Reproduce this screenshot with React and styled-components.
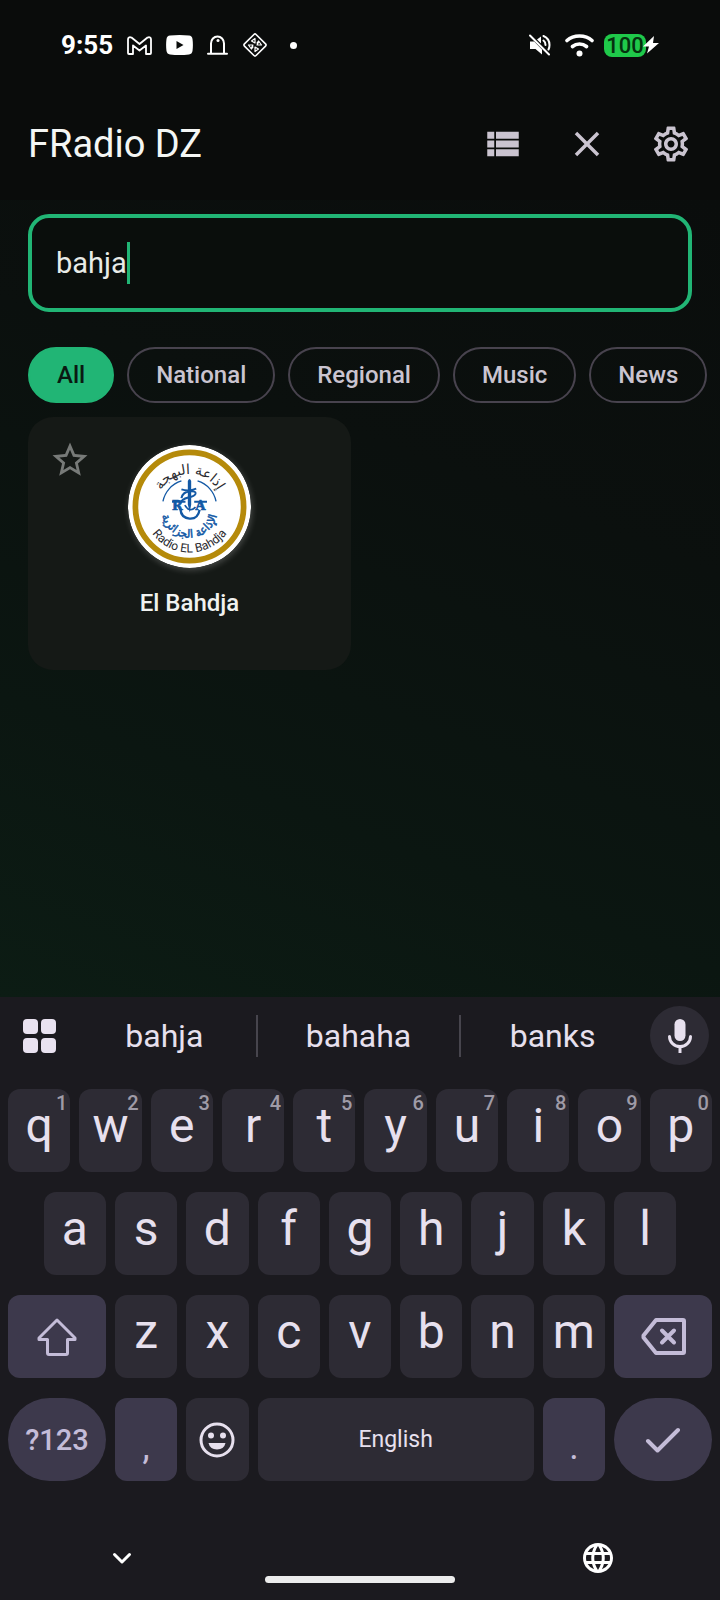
import React, { useState } from 'react'
import styled, { createGlobalStyle } from 'styled-components'
import { MdViewList, MdClose, MdOutlineSettings, MdStarOutline, MdLanguage } from 'react-icons/md'

const GlobalStyle = createGlobalStyle`
  * {
    box-sizing: border-box;
  }

  body {
    margin: 0;
    background: #0a0d0c;
    font-family: Roboto, "Liberation Sans", sans-serif;
  }

  button, input {
    margin: 0;
    padding: 0;
    border: 0;
    background: none;
    color: inherit;
    font: inherit;
    outline: none;
  }

  svg {
    display: block;
  }
`

const Screen = styled.div`
  min-height: 100vh;
  display: flex;
  flex-direction: column;
  overflow: hidden;
  background: #0a0c0b;
`

const StatusBar = styled.div`
  height: 88px;
  padding: 2px 60px 0 61px;
  display: flex;
  align-items: center;
  justify-content: space-between;
  color: #ffffff;
`

const StatusGroup = styled.div`
  display: flex;
  align-items: center;
  gap: 14px;
`

const Clock = styled.time`
  font-size: 26px;
  font-weight: 700;
  line-height: 28px;
`

const Dot = styled.i`
  width: 7px;
  height: 7px;
  margin-left: 8px;
  border-radius: 50%;
  background: #ffffff;
`

const Battery = styled.div`
  margin-left: -4px;
  display: flex;
  align-items: center;
`

const Charge = styled.span`
  width: 42px;
  height: 23px;
  border-radius: 8px;
  background: #1fc94a;
  color: #06300f;
  font-size: 22px;
  font-weight: 500;
  line-height: 24px;
  text-align: center;
`

const Bolt = styled.svg`
  width: 19px;
  height: 20px;
  margin-left: -5px;
`

const Header = styled.header`
  height: 112px;
  padding: 0 7px 0 28px;
  display: flex;
  align-items: center;
`

const Title = styled.h1`
  flex: 1;
  margin: 0;
  font-size: 38px;
  font-weight: 400;
  line-height: 48px;
  color: #f4f6f4;
`

const IconButton = styled.button`
  width: 84px;
  height: 84px;
  display: grid;
  place-items: center;
  color: #cac4d0;
  font-size: 42px;
`

const Main = styled.main`
  flex: 1;
  padding: 14px 28px;
  background: linear-gradient(21deg, #0c1c14 0%, #0b1611 28%, #0b100e 65%, #0a0d0c 100%);
`

const SearchBox = styled.label`
  height: 98px;
  padding: 0 24px;
  display: flex;
  align-items: center;
  border: 4px solid #21b575;
  border-radius: 21px;
  background: #0a0e0c;
`

const SearchInput = styled.input`
  field-sizing: content;
  font-size: 29px;
  line-height: 42px;
  color: #e8ebe8;
  caret-color: transparent;
`

const Caret = styled.i`
  width: 3px;
  height: 42px;
  background: #21b575;
`

const Chips = styled.div`
  margin: 35px -28px 0 0;
  display: flex;
  gap: 13px;
  overflow: hidden;
`

const Chip = styled.button`
  flex: none;
  height: 56px;
  padding: 0 27px;
  border: 2px solid ${p => p.$active ? '#21b575' : '#48434e'};
  border-radius: 28px;
  background: ${p => p.$active ? '#21b575' : 'transparent'};
  color: ${p => p.$active ? '#0a1a12' : '#cac4d0'};
  font-size: 24px;
  font-weight: 500;
  line-height: 35px;
`

const Stations = styled.div`
  margin-top: 14px;
  display: grid;
  grid-template-columns: 1fr 1fr;
  gap: 18px;
`

const Card = styled.article`
  position: relative;
  min-height: 253px;
  padding: 28px 0 49px;
  display: flex;
  flex-direction: column;
  align-items: center;
  gap: 18px;
  border-radius: 25px;
  background: #151916;
`

const Favourite = styled.button`
  position: absolute;
  top: 22px;
  left: 21px;
  color: #777a78;
  font-size: 42px;
`

const Logo = styled.svg`
  width: 123px;
  height: 123px;
  border-radius: 50%;
  box-shadow: 1px 2px 6px rgba(255, 255, 255, .22);
`

const StationName = styled.h2`
  margin: 0;
  font-size: 24px;
  font-weight: 500;
  line-height: 35px;
  color: #f0f2f0;
`

const Keyboard = styled.section`
  background: #1b1a1f;
  color: #e7e0ee;
`

const Strip = styled.div`
  height: 77px;
  padding: 0 11px 0 23px;
  display: flex;
  align-items: center;
`

const Suggestions = styled.div`
  flex: 1;
  height: 42px;
  margin: 0 6px 0 17px;
  display: grid;
  grid-template-columns: 8fr 9fr 8fr;
`

const Suggestion = styled.button`
  font-size: 32px;
  line-height: 40px;

  &:nth-child(2) {
    border: solid #47454d;
    border-width: 0 2px;
  }
`

const MicButton = styled.button`
  width: 59px;
  height: 59px;
  display: grid;
  place-items: center;
  border-radius: 50%;
  background: #2d2b34;
`

const Keys = styled.div`
  padding: 15px 8px 0;
  display: grid;
  grid-template-columns: repeat(20, 1fr);
  grid-auto-rows: 83px;
  gap: 20px 9px;
`

const Key = styled.button`
  position: relative;
  grid-column: ${p => p.$start ? `${p.$start} / ` : ''}span ${p => p.$span || 2};
  min-width: 0;
  display: flex;
  align-items: center;
  justify-content: center;
  border-radius: ${p => p.$round ? 42 : 12}px;
  background: ${p => p.$special ? '#3d394c' : '#2d2b34'};
  color: ${p => p.$special ? '#c4bcd8' : '#e7e0ee'};
`

const Letter = styled(Key)`
  padding-bottom: 10px;
  font-size: 48px;
  line-height: 56px;
`

const Hint = styled.small`
  position: absolute;
  top: 2px;
  right: 3px;
  color: #9f9ba7;
  font-size: 20px;
  font-weight: 500;
  line-height: 24px;
`

const Symbols = styled(Key)`
  font-size: 29px;
  font-weight: 500;
`

const Punctuation = styled(Key)`
  padding-top: 14px;
  font-size: 36px;
`

const Space = styled(Key)`
  font-size: 23px;
`

const NavBar = styled.div`
  height: 119px;
  padding: 59px 104px 17px;
  display: flex;
  justify-content: space-between;
  align-items: flex-start;
  color: #ffffff;
`

const NavButton = styled.button`
  width: 36px;
  height: 36px;
  font-size: 36px;
`

const HomeHandle = styled.i`
  width: 190px;
  height: 7px;
  align-self: flex-end;
  border-radius: 4px;
  background: #ececec;
`

const Line = ({ w, h, stroke = 3, children }) => (
  <svg width={w} height={h} viewBox={`0 0 ${w} ${h}`} fill='none' stroke='currentColor' strokeWidth={stroke} strokeLinecap='round' strokeLinejoin='round'>
    {children}
  </svg>
)

const StatusIcons = () => (
  <>
    <Line w={25} h={19} stroke={1.8}>
      <path d='M1 3.500V17q0 1 1 1h4V9.500l6.500 5 6.500-5V18h4q1 0 1-1V3.500q0-3-3.500-2L12.500 8 4.500 1.500Q1 .5 1 3.500z' />
    </Line>
    <svg width='27' height='20' viewBox='0 0 27 20'>
      <path fill='#fff' fillRule='evenodd' d='M4 .6Q13.500-.5 23 .6q3 .3 3.500 3.400.8 6 0 12-.5 3.100-3.500 3.400-9.500 1.100-19 0Q1 19.100.5 16q-.8-6 0-12Q1 .9 4 .6zM10.500 6v8l7-4z' />
    </svg>
    <Line w={21} h={20} stroke={2}>
      <path d='M1 18.800h19M4 18.500V8.500a6.500 7 0 0 1 13 0v10' />
      <circle cx='11' cy='5.500' r='1.500' fill='currentColor' stroke='none' />
    </Line>
    <Line w={26} h={26} stroke={1.6}>
      <rect x='4.800' y='4.800' width='16.400' height='16.400' rx='1.500' transform='rotate(45 13 13)' />
      <path strokeWidth='1.200' d='M13 6.500V11L9.500 9zM19.500 13H15l2-3.500zM13 19.500V15l3.500 2zM6.500 13H11l-2 3.500zM16.500 9 15 11M9.500 17l1.500-2' />
    </Line>
  </>
)

const MuteIcon = () => (
  <svg width='22' height='22' viewBox='0 0 22 22' fill='none' stroke='#fff' strokeLinecap='round'>
    <path fill='#fff' stroke='none' d='M1 7.500h4.200L13 15.500v5L6.500 15H1zM8 5.500 12 2.500v7z' />
    <path strokeWidth='2' d='M14.500 6.500q2 1.500 2 4.500M14.500 2q6 2.500 6 9 0 2.500-1 4.500M1 1.500l19 19' />
  </svg>
)

const WifiIcon = () => (
  <svg width='29' height='23' viewBox='0 0 29 23' fill='none' stroke='#fff' strokeWidth='3.600' strokeLinecap='round'>
    <path d='M2 6.500Q7 2 14.500 2T27 6.500M7.500 12.500q3-2.500 7-2.500t7 2.500' />
    <circle cx='14.500' cy='19.500' r='3' fill='#fff' stroke='none' />
  </svg>
)

const StationLogo = () => (
  <Logo viewBox='-183 -183 366 366' role='img' aria-label='Radio El Bahdja'>
    <defs>
      <path id='arc-top' d='M-97 0A97 97 0 0 1 97 0' />
      <path id='arc-bottom' d='M-137 0A137 137 0 0 0 137 0' />
      <path id='arc-ring' d='M-84 9A84 84 0 0 0 84 9' />
    </defs>
    <circle r='183' fill='#fff' />
    <circle r='161' fill='none' stroke='#b58a0a' strokeWidth='17' />
    <g fill='#2b2b30' textAnchor='middle'>
      <text fontFamily='DejaVu Sans' fontSize='41' direction='rtl'>
        <textPath href='#arc-top' startOffset='50%'>إذاعة البهجة</textPath>
      </text>
      <text fontFamily='Roboto' fontSize='36'>
        <textPath href='#arc-bottom' startOffset='50%'>Radio EL Bahdja</textPath>
      </text>
    </g>
    <g fill='none' stroke='#1359a5' strokeWidth='4'>
      <path d='M-79-15A80 80 0 0 1-24-76M24-76A80 80 0 0 1 79-15' />
      <path strokeWidth='6' d='M-24-51q22 7 44-2M-24-25q4-18 24-20t18 7q-3 8-22 11-20 5-22 17' />
      <path strokeWidth='7' d='M-27 8q2 26 27 28t30-26' />
      <path strokeWidth='5' d='M-14-4Q0 20 18 2' />
    </g>
    <path fill='#1359a5' d='M-5-76q5-12 10 0v70L1 18-5-6z' />
    <g fill='#1359a5' stroke='#1359a5' strokeWidth='2' fontFamily='DejaVu Serif' fontWeight='700' fontSize='38'>
      <text x='-52' y='11'>R</text>
      <text x='18' y='11'>A</text>
    </g>
    <path fill='none' stroke='#1359a5' strokeWidth='6' d='M-52-14H-12M14-14H52' />
    <text fill='#1359a5' stroke='#1359a5' strokeWidth='1.500' fontFamily='DejaVu Sans' fontSize='34' textAnchor='middle' direction='rtl'>
      <textPath href='#arc-ring' startOffset='50%'>الإذاعة الجزائرية</textPath>
    </text>
  </Logo>
)

const chips = ['All', 'National', 'Regional', 'Music', 'News']
const top = [...'qwertyuiop']
const middle = [...'asdfghjkl']
const bottom = [...'zxcvbnm']

const App = () => {
  const [query, setQuery] = useState('bahja')
  const [filter, setFilter] = useState('All')

  const type = char => () => setQuery(query + char)

  return (
    <Screen>
      <GlobalStyle />
      <StatusBar>
        <StatusGroup>
          <Clock>9:55</Clock>
          <StatusIcons />
          <Dot />
        </StatusGroup>
        <StatusGroup>
          <MuteIcon />
          <WifiIcon />
          <Battery>
            <Charge>100</Charge>
            <Bolt viewBox='0 0 19 20'>
              <path fill='#fff' d='M13 1 2 11.500h6L6 18.500 18 8h-6z' />
            </Bolt>
          </Battery>
        </StatusGroup>
      </StatusBar>
      <Header>
        <Title>FRadio DZ</Title>
        <IconButton aria-label='List view'><MdViewList /></IconButton>
        <IconButton aria-label='Close search' onClick={() => setQuery('')}><MdClose /></IconButton>
        <IconButton aria-label='Settings'><MdOutlineSettings /></IconButton>
      </Header>
      <Main>
        <SearchBox>
          <SearchInput aria-label='Search stations' value={query} onChange={e => setQuery(e.target.value)} />
          <Caret />
        </SearchBox>
        <Chips>
          {chips.map(name => (
            <Chip key={name} $active={name === filter} onClick={() => setFilter(name)}>{name}</Chip>
          ))}
        </Chips>
        <Stations>
          <Card>
            <Favourite aria-label='Add to favourites'><MdStarOutline /></Favourite>
            <StationLogo />
            <StationName>El Bahdja</StationName>
          </Card>
        </Stations>
      </Main>
      <Keyboard>
        <Strip>
          <button aria-label='Keyboard menu'>
            <svg width='33' height='34' viewBox='0 0 33 34' fill='#e9e2f0'>
              <rect width='15' height='15' rx='4' />
              <rect x='18' width='15' height='15' rx='4' />
              <rect y='19' width='15' height='15' rx='4' />
              <rect x='18' y='19' width='15' height='15' rx='4' />
            </svg>
          </button>
          <Suggestions>
            {['bahja', 'bahaha', 'banks'].map(word => (
              <Suggestion key={word} onClick={() => setQuery(word)}>{word}</Suggestion>
            ))}
          </Suggestions>
          <MicButton aria-label='Voice input'>
            <svg width='26' height='34' viewBox='0 0 26 34' fill='none' stroke='#e7e0ee' strokeWidth='3'>
              <rect x='7.500' y='0' width='11' height='22' rx='5.500' fill='#e7e0ee' stroke='none' />
              <path strokeLinecap='round' d='M2.500 17.500a10.500 10 0 0 0 21 0' />
              <path d='M13 27v7' />
            </svg>
          </MicButton>
        </Strip>
        <Keys>
          {top.map((char, i) => (
            <Letter key={char} onClick={type(char)}>
              {char}
              <Hint>{(i + 1) % 10}</Hint>
            </Letter>
          ))}
          {middle.map((char, i) => (
            <Letter key={char} $start={i === 0 ? 2 : undefined} onClick={type(char)}>{char}</Letter>
          ))}
          <Key $start={1} $span={3} $special aria-label='Shift'>
            <Line w={40} h={38}>
              <path d='M20 2 2 20v1.500h8.500V35q0 1.500 1.500 1.500h17q1.500 0 1.500-1.500V21.500H38V20z' />
            </Line>
          </Key>
          {bottom.map(char => (
            <Letter key={char} onClick={type(char)}>{char}</Letter>
          ))}
          <Key $span={3} $special aria-label='Backspace' onClick={() => setQuery(query.slice(0, -1))}>
            <Line w={45} h={37} stroke={4}>
              <path d='M15 2h27q1 0 1 1v31q0 1-1 1H15L2.500 19.500v-2zM21 12.500l12 12M33 12.500l-12 12' />
            </Line>
          </Key>
          <Symbols $span={3} $special $round>?123</Symbols>
          <Punctuation $special onClick={type(',')}>,</Punctuation>
          <Key aria-label='Emoji'>
            <Line w={36} h={36}>
              <circle cx='18' cy='18' r='16' />
              <circle cx='12' cy='13.500' r='3' fill='currentColor' stroke='none' />
              <circle cx='24' cy='13.500' r='3' fill='currentColor' stroke='none' />
              <path fill='currentColor' stroke='none' d='M9.500 21h17q-1.500 6.500-8.500 6.500T9.500 21z' />
            </Line>
          </Key>
          <Space $span={8} onClick={type(' ')}>English</Space>
          <Punctuation $special onClick={type('.')}>.</Punctuation>
          <Key $span={3} $special $round aria-label='Done'>
            <Line w={36} h={26} stroke={4}>
              <path d='M3 14l9.500 9.500L33 3' />
            </Line>
          </Key>
        </Keys>
        <NavBar>
          <NavButton aria-label='Hide keyboard'>
            <Line w={36} h={36}>
              <path d='M10.500 14.500 18 22l7.500-7.500' />
            </Line>
          </NavButton>
          <HomeHandle />
          <NavButton aria-label='Change language'><MdLanguage /></NavButton>
        </NavBar>
      </Keyboard>
    </Screen>
  )
}

export default App
